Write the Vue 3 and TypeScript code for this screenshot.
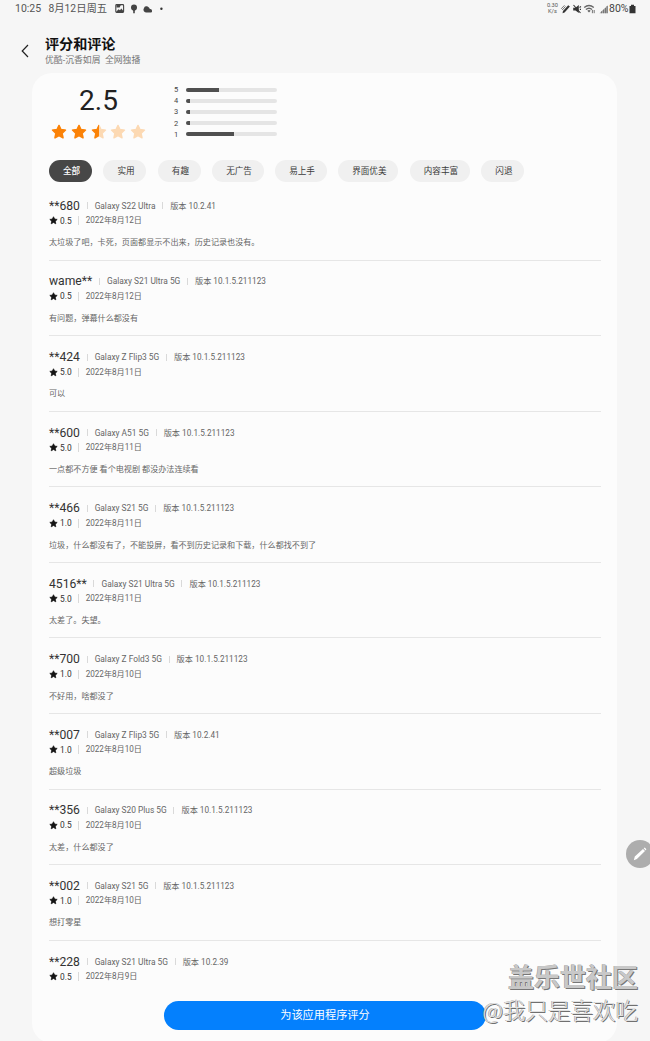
<script setup lang="ts">
interface Review {
  name: string
  device: string
  version: string
  score: string
  date: string
  text: string
}

const starPath = 'M12 2 15 8.2 21.8 9.1 16.8 13.9 18.1 20.8 12 17.4 5.9 20.8 7.2 13.9 2.2 9.1 9 8.2Z'

const stars: number[] = [1, 1, 0.5, 0, 0]

const bars: { label: number; share: number }[] = [
  { label: 5, share: 36 },
  { label: 4, share: 4.5 },
  { label: 3, share: 4.5 },
  { label: 2, share: 4 },
  { label: 1, share: 52.5 },
]

const chips: string[] = ['全部', '实用', '有趣', '无广告', '易上手', '界面优美', '内容丰富', '闪退']

const reviews: Review[] = [
  { name: '**680', device: 'Galaxy S22 Ultra', version: '10.2.41', score: '0.5', date: '2022年8月12日', text: '太垃圾了吧，卡死，页面都显示不出来，历史记录也没有。' },
  { name: 'wame**', device: 'Galaxy S21 Ultra 5G', version: '10.1.5.211123', score: '0.5', date: '2022年8月12日', text: '有问题，弹幕什么都没有' },
  { name: '**424', device: 'Galaxy Z Flip3 5G', version: '10.1.5.211123', score: '5.0', date: '2022年8月11日', text: '可以' },
  { name: '**600', device: 'Galaxy A51 5G', version: '10.1.5.211123', score: '5.0', date: '2022年8月11日', text: '一点都不方便 看个电视剧 都没办法连续看' },
  { name: '**466', device: 'Galaxy S21 5G', version: '10.1.5.211123', score: '1.0', date: '2022年8月11日', text: '垃圾，什么都没有了，不能投屏，看不到历史记录和下载，什么都找不到了' },
  { name: '4516**', device: 'Galaxy S21 Ultra 5G', version: '10.1.5.211123', score: '5.0', date: '2022年8月11日', text: '太差了。失望。' },
  { name: '**700', device: 'Galaxy Z Fold3 5G', version: '10.1.5.211123', score: '1.0', date: '2022年8月10日', text: '不好用，啥都没了' },
  { name: '**007', device: 'Galaxy Z Flip3 5G', version: '10.2.41', score: '1.0', date: '2022年8月10日', text: '超级垃圾' },
  { name: '**356', device: 'Galaxy S20 Plus 5G', version: '10.1.5.211123', score: '0.5', date: '2022年8月10日', text: '太差，什么都没了' },
  { name: '**002', device: 'Galaxy S21 5G', version: '10.1.5.211123', score: '1.0', date: '2022年8月10日', text: '想打零星' },
  { name: '**228', device: 'Galaxy S21 Ultra 5G', version: '10.2.39', score: '0.5', date: '2022年8月9日', text: '' },
]
</script>

<template>
  <div class="screen">
    <div class="status">
      <span class="time">10:25</span>
      <span class="day">8月12日周五</span>
      <svg class="note" viewBox="0 0 48 12" width="48" height="12">
        <rect x="0.8" y="1.6" width="7.8" height="7.8" rx="0.8" fill="none" stroke="#444" stroke-width="1.1" />
        <path d="M1 9 3.5 6.2 5 7.3 6.3 5.5 8.4 8V9.2H1Z" fill="#444" />
        <path d="M1.5 2H5.8L4.6 4.6H1.5Z" fill="#444" />
        <circle cx="19" cy="4.4" r="3" fill="#444" />
        <path d="M17 6.3H21L19.8 7.8V10.3H18.2V7.8Z" fill="#444" />
        <path d="M31 9.4A2.7 2.7 0 0 1 28.9 5.2 2.8 2.8 0 0 1 33.6 4.2 2.6 2.6 0 0 1 34.8 6 2 2 0 0 1 37 7.4 1.8 1.8 0 0 1 36.3 9.4Z" fill="#444" />
        <circle cx="46.4" cy="5.8" r="1.2" fill="#333" />
      </svg>
      <div class="right">
        <span class="speed"><span>0.30</span><span>K/s</span></span>
        <svg class="sys" viewBox="0 0 50 12" width="50" height="12">
          <path d="M2.5 10.2 3 8 8.2 2.2 9.9 3.6 4.6 9.4Z" fill="#333" />
          <path d="M1.2 5.8 4.5 2.3M2.2 7 5.5 3.4" stroke="#555" stroke-width="0.8" fill="none" />
          <path d="M13.2 4.8H15.5L18.8 2V10L15.5 7.6H13.2Z" fill="#333" />
          <path d="M13.5 2 20.5 10M19.5 4.5 21 3.5M19.8 6.4H21" stroke="#333" stroke-width="1.1" />
          <path d="M24.2 4.6Q29 0.4 33.8 4.6M25.9 6.6Q29 3.8 32.1 6.6" fill="none" stroke="#666" stroke-width="1.3" />
          <path d="M27.3 7.7Q29 6.5 30.7 7.7L29 9.6Z" fill="#666" />
          <path d="M32.4 7V10.2M34.2 7V10.2" stroke="#666" stroke-width="0.9" />
          <path d="M39.5 10.2 47.8 2.2V10.2Z" fill="#aaa" />
          <path d="M41.5 10.2V8.4M43.5 10.2V6.7M45.5 10.2V5M47.2 10.2V3" stroke="#777" stroke-width="1" />
        </svg>
        <span class="pct">80%</span>
        <svg class="battery" viewBox="0 0 7 10" width="7" height="10">
          <path d="M2 0.8H5V2H6.5V9.2H0.5V2H2Z" fill="#333" />
        </svg>
      </div>
    </div>

    <header class="header">
      <svg class="back" viewBox="0 0 8 14" width="8" height="14">
        <path d="M7 1 1.2 7 7 13" fill="none" stroke="#222" stroke-width="1.2" />
      </svg>
      <div class="titles">
        <h1>评分和评论</h1>
        <p>优酷-沉香如屑&nbsp; 全网独播</p>
      </div>
    </header>

    <main class="card">
      <section class="summary">
        <div class="overall">
          <div class="big">2.5</div>
          <div class="stars">
            <svg v-for="(s, i) in stars" :key="i" viewBox="0 0 24 24" width="16" height="16">
              <defs>
                <clipPath :id="`fill-${i}`"><rect x="0" y="0" :width="24 * s" height="24" /></clipPath>
              </defs>
              <path :d="starPath" fill="#fcd9b3" stroke="#fcd9b3" stroke-width="2" stroke-linejoin="round" />
              <path :d="starPath" fill="#fb8207" stroke="#fb8207" stroke-width="2" stroke-linejoin="round" :clip-path="`url(#fill-${i})`" />
            </svg>
          </div>
        </div>
        <div class="bars">
          <div v-for="b in bars" :key="b.label" class="bar">
            <span class="label">{{ b.label }}</span>
            <div class="track"><div class="fill" :style="{ width: b.share + '%' }"></div></div>
          </div>
        </div>
      </section>

      <nav class="chips">
        <span v-for="(c, i) in chips" :key="c" class="chip" :class="{ active: i === 0 }">{{ c }}</span>
      </nav>

      <section class="reviews">
        <article v-for="r in reviews" :key="r.name" class="review">
          <div class="who">
            <span class="name">{{ r.name }}</span>
            <i class="sep"></i>
            <span class="meta">{{ r.device }}</span>
            <i class="sep"></i>
            <span class="meta version">版本 {{ r.version }}</span>
          </div>
          <div class="when">
            <svg viewBox="0 0 24 24" width="9" height="9"><path :d="starPath" fill="#151515" stroke="#151515" stroke-width="2" /></svg>
            <span class="score">{{ r.score }}</span>
            <i class="sep tall"></i>
            <span class="date">{{ r.date }}</span>
          </div>
          <p class="text">{{ r.text }}</p>
        </article>
      </section>
    </main>

    <button class="rate">为该应用程序评分</button>

    <div class="edit">
      <svg viewBox="0 0 28 28" width="28" height="28">
        <path d="M7.8 20.2 8.8 16.6 17 8.9 19 11 10.9 19ZM17.7 8.3 18.8 7.4 20.4 9.2 19.6 10.4Z" fill="#fff" />
      </svg>
    </div>

    <div class="mark">
      <div class="community">盖乐世社区</div>
      <div class="author">@我只是喜欢吃</div>
    </div>
  </div>
</template>

<style>
body {
  margin: 0;
  background: #f6f6f6;
}
</style>

<style scoped>
.screen {
  position: relative;
  width: 650px;
  height: 1041px;
  overflow: hidden;
  background: #f6f6f6;
  font-family: Roboto, "Noto Sans CJK SC", sans-serif;
  color: #222;
}
.status {
  display: flex;
  align-items: center;
  height: 17px;
  padding: 0 14px 0 15px;
  font-size: 10.5px;
  color: #555;
  line-height: 17px;
  white-space: nowrap;
}
.time {
  width: 33.5px;
}
.day {
  width: 66px;
  font-size: 10.3px;
}
.right {
  display: flex;
  align-items: center;
  margin-left: auto;
}
.speed {
  display: flex;
  flex-direction: column;
  align-items: center;
  margin-right: 2px;
  font-size: 5.7px;
  line-height: 5.5px;
}
.pct {
  margin-left: -1px;
  color: #444;
}
.battery {
  margin-left: 0.5px;
}
.header {
  display: flex;
  height: 56px;
}
.back {
  margin: 27px 0 0 20.5px;
}
.titles {
  margin: 18px 0 0 16.5px;
}
h1 {
  margin: 0;
  font-size: 14.1px;
  line-height: 18px;
  font-weight: 600;
  color: #111;
}
.titles p {
  margin: 0;
  font-size: 8.85px;
  line-height: 14px;
  color: #777;
}
.card {
  box-sizing: border-box;
  width: 585px;
  height: 970px;
  margin-left: 32px;
  padding: 12px 16px 0 17px;
  border-radius: 20px;
  background: #fcfcfc;
}
.summary {
  display: flex;
  height: 75px;
}
.overall {
  width: 99px;
}
.big {
  font-size: 28px;
  line-height: 32px;
  text-align: center;
  color: #222;
}
.stars {
  display: flex;
  gap: 3.75px;
  margin: 6.5px 0 0 2px;
}
.bars {
  margin: -1px 0 0 26px;
}
.bar {
  display: flex;
  align-items: center;
  height: 11.2px;
}
.label {
  width: 12px;
  font-size: 7.5px;
  line-height: 11px;
  color: #444;
}
.track {
  width: 91px;
  height: 4px;
  border-radius: 2px;
  overflow: hidden;
  background: #e5e5e5;
}
.fill {
  height: 4px;
  background: #505050;
}
.chips {
  display: flex;
  gap: 11.6px;
  height: 22px;
}
.chip {
  padding: 0 11.6px 0 14px;
  height: 21.5px;
  border-radius: 11px;
  background: #f0f0f0;
  font-size: 8.6px;
  line-height: 22px;
  color: #3c3c3c;
  white-space: nowrap;
}
.chip.active {
  background: #474747;
  color: #fff;
  font-weight: 500;
}
.reviews {
  margin-top: 3.1px;
}
.review {
  box-sizing: border-box;
  height: 75.57px;
  padding-top: 12.8px;
  border-bottom: 1px solid #e6e6e6;
}
.review:last-child {
  border-bottom: 0;
}
.who {
  display: flex;
  align-items: center;
  height: 16px;
  white-space: nowrap;
}
.name {
  font-size: 12.15px;
  line-height: 16px;
  color: #333;
}
.meta {
  font-size: 8.37px;
  line-height: 16px;
  color: #666;
}
.version {
  font-size: 8.2px;
}
.sep {
  width: 1px;
  height: 7px;
  margin: 0 7px 0 6.7px;
  background: #d9d9d9;
}
.sep.tall {
  height: 9px;
  margin: 0 7px 0 6px;
}
.when {
  display: flex;
  align-items: center;
  height: 14px;
  font-size: 8.4px;
  color: #666;
}
.score {
  margin-left: 2px;
  color: #333;
}
.date {
  font-size: 8.15px;
  line-height: 13px;
}
.text {
  margin: 8.4px 0 0;
  font-size: 8.1px;
  line-height: 12px;
  color: #666;
}
.rate {
  position: absolute;
  left: 164px;
  top: 1001px;
  width: 322px;
  height: 29px;
  padding: 1px 0 0;
  border: 0;
  border-radius: 15px;
  background: #0480fd;
  color: #fff;
  font-family: inherit;
  font-size: 11.2px;
  line-height: 28px;
}
.edit {
  position: absolute;
  left: 626px;
  top: 840px;
  width: 28px;
  height: 28px;
  border-radius: 50%;
  background: #adadad;
}
.edit svg {
  display: block;
}
.mark {
  position: absolute;
  right: 12px;
  top: 959px;
  text-align: right;
  white-space: nowrap;
  font-family: "Noto Sans CJK SC", sans-serif;
}
.community {
  font-size: 26px;
  line-height: 34px;
  font-weight: 700;
  color: #c8c8c8;
  text-shadow: 1px 1px 0 #777, -0.5px -0.5px 0 #999;
}
.author {
  font-size: 22.5px;
  line-height: 33px;
  font-weight: 300;
  color: #e0e0e0;
  text-shadow: 1px 1px 0 #707070, -0.5px -0.5px 0 #999;
}
</style>
